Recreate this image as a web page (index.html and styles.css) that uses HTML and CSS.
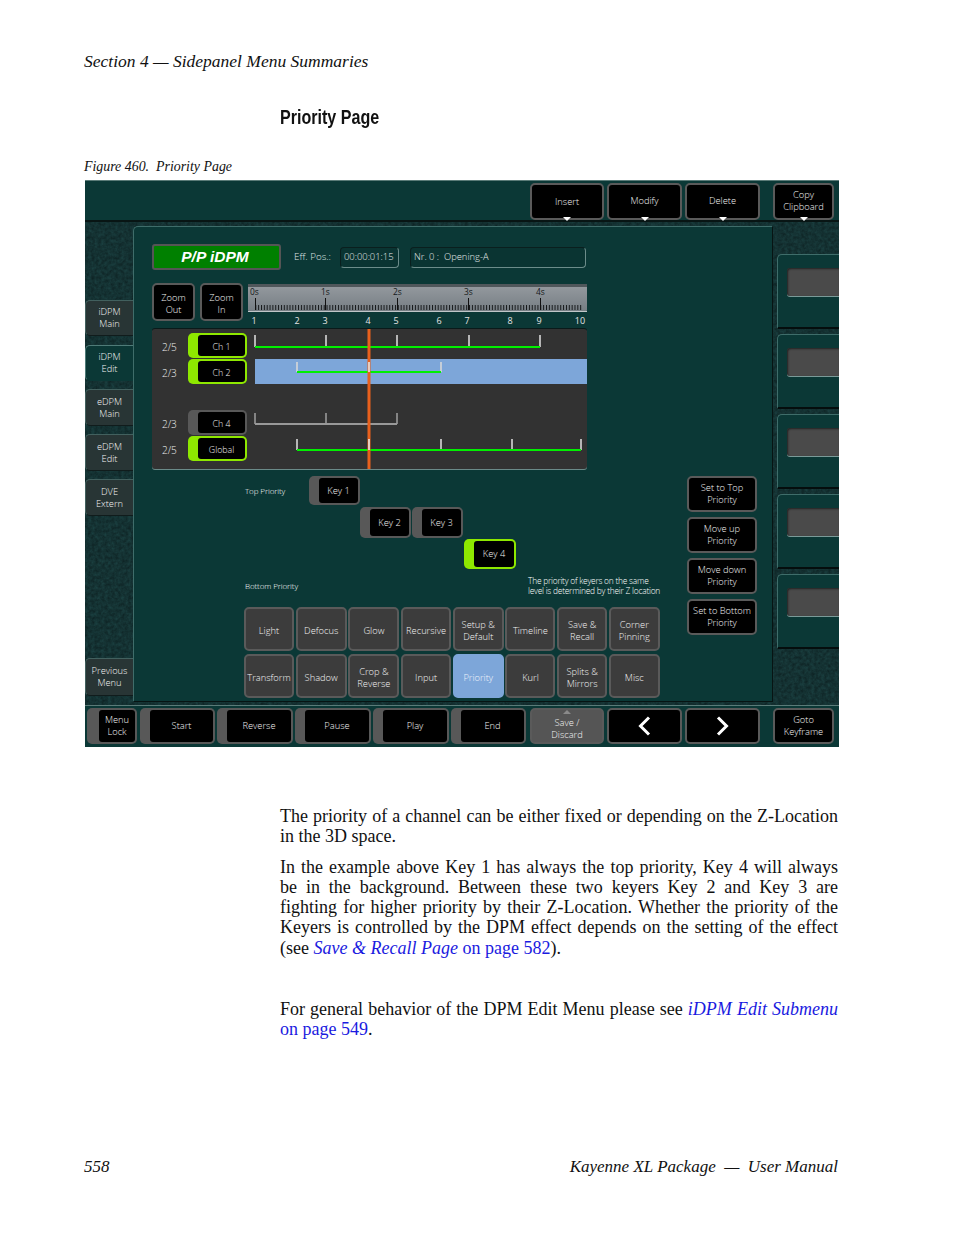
FILE: index.html
```html
<!DOCTYPE html>
<html lang="en">
<head>
<meta charset="utf-8">
<title>Priority Page</title>
<link rel="stylesheet" href="styles.css">
</head>
<body>
<div class="page">
  <header class="running-head">Section 4 — Sidepanel Menu Summaries</header>
  <h2 class="page-title">Priority Page</h2>
  <div class="caption">Figure 460.&nbsp; Priority Page</div>

  <div class="ui">
    <svg class="noise" width="754" height="567" aria-hidden="true">
      <filter id="nz"><feTurbulence type="fractalNoise" baseFrequency="0.3" numOctaves="3" seed="4"/><feColorMatrix values="0 0 0 0 0.03  0 0 0 0 0.17  0 0 0 0 0.17  0.45 0 0 0 0"/></filter>
      <rect width="754" height="567" filter="url(#nz)"/>
    </svg>
    <div class="topbar">
      <div class="btn w74 drop"><span class="lower">Insert</span></div>
      <div class="btn w75 drop">Modify</div>
      <div class="btn w75 drop">Delete</div>
      <div class="btn w61 gap-l drop">Copy<br>Clipboard</div>
    </div>

    <div class="middle">
      <nav class="tabs">
        <div class="tab t1">iDPM<br>Main</div>
        <div class="tab active t2">iDPM<br>Edit</div>
        <div class="tab t3">eDPM<br>Main</div>
        <div class="tab t3">eDPM<br>Edit</div>
        <div class="tab t3">DVE<br>Extern</div>
        <div class="tab prev">Previous<br>Menu</div>
      </nav>

      <main class="panel">
        <div class="status-row">
          <div class="mode">P/P iDPM</div>
          <span class="eff">Eff. Pos.:</span>
          <div class="field f-time">00:00:01:15</div>
          <div class="field f-name">Nr. 0 :&nbsp; Opening-A</div>
        </div>

        <div class="zoom-row">
          <div class="btn zoom">Zoom<br>Out</div>
          <div class="btn zoom">Zoom<br>In</div>
          <svg class="ruler" width="339" height="46" viewBox="0 0 339 46">
            <defs>
              <linearGradient id="rg" x1="0" y1="0" x2="0" y2="1">
                <stop offset="0" stop-color="#969ba0"/>
                <stop offset="1" stop-color="#757d83"/>
              </linearGradient>
              <pattern id="mt" width="2.85" height="6" patternUnits="userSpaceOnUse" x="7.3" y="20">
                <rect width="1" height="6" fill="#15181a"/>
              </pattern>
            </defs>
            <rect width="339" height="28" rx="2" fill="url(#rg)"/>
            <rect width="339" height="3" fill="#50575b"/>
            <rect y="27" width="339" height="1" fill="#c0c6c8"/>
            <rect x="7.3" y="21" width="327" height="5" fill="url(#mt)"/>
            <path d="M7.5 14V26M77.5 14V26M149.5 14V26M220.5 14V26M292.5 14V26" stroke="#111" stroke-width="1"/>
            <g class="ruler-txt">
              <text x="2" y="11">0s</text><text x="73" y="11">1s</text><text x="145" y="11">2s</text><text x="216" y="11">3s</text><text x="288" y="11">4s</text>
            </g>
            <g class="ruler-num">
              <text x="6" y="40">1</text><text x="49" y="40">2</text><text x="77" y="40">3</text><text x="120" y="40">4</text><text x="148" y="40">5</text><text x="191" y="40">6</text><text x="219" y="40">7</text><text x="262" y="40">8</text><text x="291" y="40">9</text><text x="332" y="40">10</text>
            </g>
          </svg>
        </div>

        <div class="timeline">
          <svg class="tracks" width="435" height="140" viewBox="0 0 435 140">
            <rect x="103" y="30" width="332" height="25" fill="#7da6d9"/>
            <g stroke="#d8d8d8" stroke-width="1.6">
              <path d="M103 6V18M174 6V18M245 6V18M317 6V18M388 6V18"/>
              <path d="M145 33V43M217 33V43M289 33V43"/>
              <path d="M145 110V121M217 110V121M289 110V121M360 110V121M429 110V121"/>
            </g>
            <path d="M103 84V95M174 84V95M245 84V95" stroke="#999" stroke-width="1.6"/>
            <path d="M103 18H388" stroke="#00f000" stroke-width="2"/>
            <path d="M145 43H289" stroke="#00f000" stroke-width="2"/>
            <path d="M103 95H245" stroke="#999" stroke-width="2"/>
            <path d="M145 121H429" stroke="#00f000" stroke-width="2"/>
            <rect x="215.5" y="0" width="3" height="140" fill="#e8601c"/>
            <g stroke="#e8e8e8" stroke-width="1.6">
              <path d="M217 33V43M217 110V121"/>
            </g>
          </svg>
          <div class="track"><span class="ratio">2/5</span><div class="key on tk"><span class="key-in">Ch 1</span></div></div>
          <div class="track"><span class="ratio">2/3</span><div class="key on tk"><span class="key-in">Ch 2</span></div></div>
          <div class="track t-gap"><span class="ratio">2/3</span><div class="key tk"><span class="key-in">Ch 4</span></div></div>
          <div class="track"><span class="ratio">2/5</span><div class="key on tk"><span class="key-in">Global</span></div></div>
        </div>

        <div class="lower-area">
          <div class="lower-left">
            <div class="key-row"><span class="small-lbl top-lbl">Top Priority</span><div class="key k1"><span class="key-in">Key 1</span></div></div>
            <div class="key-row r2"><div class="key k2"><span class="key-in">Key 2</span></div><div class="key k2"><span class="key-in">Key 3</span></div></div>
            <div class="key-row r3"><div class="key on k3"><span class="key-in">Key 4</span></div></div>
            <div class="note-row"><span class="small-lbl bottom-lbl">Bottom Priority</span><span class="note">The priority of keyers on the same<br>level is determined by their Z location</span></div>
            <div class="menu-grid">
              <div class="cell">Light</div><div class="cell">Defocus</div><div class="cell">Glow</div><div class="cell">Recursive</div><div class="cell">Setup &amp;<br>Default</div><div class="cell">Timeline</div><div class="cell">Save &amp;<br>Recall</div><div class="cell">Corner<br>Pinning</div>
              <div class="cell">Transform</div><div class="cell">Shadow</div><div class="cell">Crop &amp;<br>Reverse</div><div class="cell">Input</div><div class="cell sel">Priority</div><div class="cell">Kurl</div><div class="cell">Splits &amp;<br>Mirrors</div><div class="cell">Misc</div>
            </div>
          </div>
          <div class="lower-right">
            <div class="btn prio">Set to Top<br>Priority</div>
            <div class="btn prio">Move up<br>Priority</div>
            <div class="btn prio">Move down<br>Priority</div>
            <div class="btn prio">Set to Bottom<br>Priority</div>
          </div>
        </div>
      </main>

      <aside class="side">
        <div class="slot"><div class="slot-in"></div></div>
        <div class="slot"><div class="slot-in"></div></div>
        <div class="slot"><div class="slot-in"></div></div>
        <div class="slot"><div class="slot-in"></div></div>
        <div class="slot"><div class="slot-in"></div></div>
      </aside>
    </div>

    <div class="bottombar">
      <div class="key b50"><span class="key-in">Menu<br>Lock</span></div>
      <div class="key b75"><span class="key-in">Start</span></div>
      <div class="key b76"><span class="key-in">Reverse</span></div>
      <div class="key b76"><span class="key-in">Pause</span></div>
      <div class="key b76"><span class="key-in">Play</span></div>
      <div class="key b75"><span class="key-in">End</span></div>
      <div class="btn w74 save">Save /<br>Discard</div>
      <div class="btn w75"><svg width="13" height="20" viewBox="0 0 13 20"><path d="M11 1.5L2.5 10L11 18.5" fill="none" stroke="#fff" stroke-width="3"/></svg></div>
      <div class="btn w75"><svg width="13" height="20" viewBox="0 0 13 20"><path d="M2 1.5L10.5 10L2 18.5" fill="none" stroke="#fff" stroke-width="3"/></svg></div>
      <div class="btn w61 gap-l">Goto<br>Keyframe</div>
    </div>
  </div>

  <article class="body-text">
    <p class="p1"><span class="j">The priority of a channel can be either fixed or depending on the Z-Location</span><span class="l">in the 3D space.</span></p>
    <p class="p2"><span class="j">In the example above Key 1 has always the top priority, Key 4 will always</span><span class="j">be in the background. Between these two keyers Key 2 and Key 3 are</span><span class="j">fighting for higher priority by their Z-Location. Whether the priority of the</span><span class="j">Keyers is controlled by the DPM effect depends on the setting of the effect</span><span class="l">(see <a class="lnk"><i>Save &amp; Recall Page</i> on page 582</a>).</span></p>
    <p class="p3"><span class="j">For general behavior of the DPM Edit Menu please see <a class="lnk"><i>iDPM Edit Submenu</i></a></span><span class="l"><a class="lnk">on page 549</a>.</span></p>
  </article>

  <footer class="foot"><span>558</span><span>Kayenne XL Package&nbsp; —&nbsp; User Manual</span></footer>
</div>
</body>
</html>
```
FILE: styles.css
```css
* { box-sizing: border-box; }
html, body { margin: 0; padding: 0; background: #fff; }
body { font-family: "Liberation Serif", serif; color: #111; }
.page { position: relative; width: 954px; height: 1235px; padding: 51px 116px 0 84px; overflow: hidden; }
.running-head { font-style: italic; font-size: 17.5px; line-height: 20px; height: 20px; white-space: nowrap; }
.page-title { font-family: "Liberation Sans", sans-serif; font-weight: 700; font-size: 19.5px; line-height: 24px; margin: 34px 0 0 196px; color: #111; transform: scaleX(0.825); transform-origin: left center; }
.caption { font-style: italic; font-size: 13.9px; line-height: 18px; margin-top: 29px; }

/* UI */
.ui { position: relative; width: 754px; height: 567px; margin: 4px 0 0 1px; background: #0c1f20; font-family: "Open Sans", "DejaVu Sans", sans-serif; font-weight: 300; font-size: 9.3px; color: #f4f4f4; display: flex; flex-direction: column; line-height: 12px; }
.noise { position: absolute; left: 0; top: 0; }
.topbar { position: relative; height: 42px; background: #0b3836; border-top: 1px solid #5b7b78; border-bottom: 2px solid #081514; display: flex; align-items: flex-start; gap: 3px; padding: 2px 0 0 445px; }
.btn { position: relative; flex: none; border: 2px solid #5a5a5a; border-radius: 5px; background: #000; display: flex; align-items: center; justify-content: center; text-align: center; }
.w74 { width: 74px; height: 37px; }
.w75 { width: 75px; height: 37px; }
.w61 { width: 61px; height: 37px; }
.gap-l { margin-left: 10px; }
.lower { position: relative; top: 1px; }
.drop { padding-bottom: 2px; }
.drop::after { content: ""; position: absolute; left: 50%; bottom: -3px; margin-left: -4px; border-style: solid; border-width: 4px 4px 0; border-color: #fff transparent transparent; }

.middle { position: relative; flex: 1; display: flex; min-height: 0; padding-top: 4px; }
.tabs { width: 48px; flex: none; display: flex; flex-direction: column; padding-top: 74px; }
.tab { height: 37px; background: #283535; border: 1px solid #42605e; border-right: 0; border-bottom-color: #101c1c; border-radius: 5px 0 0 5px; display: flex; align-items: center; justify-content: center; text-align: center; }
.t1, .t2 { height: 36px; }
.tab.active { background: #0b3836; border-color: #4f7b78; border-bottom-color: #0b3836; }
.t2 { margin-top: 9px; }
.t3 { margin-top: 8px; }
.prev { margin-top: 142px; height: 38px; }

.panel { width: 639px; height: 475px; flex: none; background: #0b3836; border: 1px solid #3f6d6a; border-width: 1px 0 0 1px; border-radius: 5px 0 0 0; box-shadow: 1px 1px 0 #071413; padding: 17px 0 0 18px; }
.status-row { display: flex; align-items: center; height: 26px; }
.mode { width: 129px; height: 26px; background: #008000; border: 2px solid #555; border-radius: 3px; color: #fff; font: italic 700 15.5px/22px "Liberation Sans", sans-serif; text-align: center; padding-right: 3px; }
.eff { margin-left: 13px; width: 46px; font-size: 9.8px; color: #dfe6e4; white-space: nowrap; }
.field { height: 21px; border: 1px solid #0a1f1e; border-right-color: #6c8c8a; border-bottom-color: #6c8c8a; border-radius: 4px; background: #0a3432; display: flex; align-items: center; font-size: 9.4px; padding-left: 3px; color: #e8ecec; white-space: nowrap; }
.f-time { width: 59px; }
.f-name { width: 176px; margin-left: 11px; }

.zoom-row { display: flex; margin-top: 13px; height: 46px; }
.zoom { width: 43px; height: 38px; margin-right: 5px; padding-top: 3px; }
.ruler { flex: none; margin-top: 1px; }
.ruler-txt text { font-size: 8.4px; font-weight: 400; fill: #15191b; }
.ruler-num text { font-size: 9px; font-weight: 400; fill: #e4e4e4; text-anchor: middle; }

.timeline { position: relative; width: 435px; height: 140px; background: #323232; border-radius: 3px; box-shadow: 0 1px 0 #6a8a88, 0 -1px 0 #0a1a1a; padding-top: 4px; }
.tracks { position: absolute; left: 0; top: 0; }
.track { position: relative; display: flex; align-items: center; height: 25px; margin-bottom: 1px; padding-left: 10px; }
.t-gap { margin-top: 26px; }
.ratio { width: 26px; font-size: 10px; padding-top: 2px; color: #eee; }

.key { flex: none; display: flex; background: #585858; border-radius: 5px; padding: 2px 2px 2px 10px; }
.key.on { background: #8ee800; }
.key-in { flex: 1; background: #000; border-radius: 3px; display: flex; align-items: center; justify-content: center; text-align: center; }
.tk { width: 59px; height: 25px; }
.tk .key-in { font-size: 8.8px; padding-top: 2px; }

.lower-area { display: flex; margin: 7px 0 0 92px; }
.lower-left { width: 443px; flex: none; }
.key-row { display: flex; }
.small-lbl { font-size: 8px; font-weight: 300; letter-spacing: -0.1px; color: #fff; }
.top-lbl { width: 65px; align-self: center; padding-left: 1px; }
.k1 { width: 51px; height: 29px; }
.r2 { margin: 2px 0 0 116px; gap: 1px; }
.k2 { width: 51px; height: 31px; }
.r3 { margin: 1px 0 0 220px; }
.k3 { width: 52px; height: 30px; }
.note-row { display: flex; align-items: center; height: 38px; padding-bottom: 4px; }
.bottom-lbl { width: 284px; padding-left: 1px; }
.note { font-size: 8.4px; font-weight: 300; line-height: 10px; letter-spacing: -0.22px; white-space: nowrap; color: #fff; }
.menu-grid { display: grid; grid-template-columns: 50px 51px 51px 50px 51px 50px 50px 51px; column-gap: 1.7px; grid-template-rows: 44px 44px; row-gap: 3px; }
.cell { background: #3c3c3c; border: 2px solid #5a5a5a; border-radius: 5px; padding-top: 4px; display: flex; align-items: center; justify-content: center; text-align: center; white-space: nowrap; }
.cell.sel { background: #7da6d9; border-color: #7da6d9; color: #eef4fb; }
.lower-right { display: flex; flex-direction: column; gap: 5px; }
.prio { width: 70px; height: 36px; }

.side { flex: 1; padding: 28px 0 0 5px; display: flex; flex-direction: column; gap: 5px; }
.slot { flex: none; height: 75px; background: #0b3836; border: 1px solid #3f6d6a; border-width: 1px 0 0 1px; border-radius: 5px 0 0 0; border-bottom: 2px solid #050d0d; padding: 13px 0 0 9px; }
.slot-in { height: 28px; background: #4a4a4a; border-radius: 3px 0 0 3px; box-shadow: inset 1px 1px 2px #222, 0 1px 0 #7a9a98; }

.bottombar { position: relative; height: 42px; margin-top: 1px; background: #0b3836; border-top: 1px solid #5b7b78; display: flex; align-items: flex-start; gap: 2px; padding: 2px 0 0 2px; }
.bottombar .btn, .bottombar .key { height: 36px; }
.b50 { width: 50px; padding-left: 12px; margin-right: 1px; }
.b75 { width: 75px; }
.b76 { width: 76px; }
.save { background: #555; margin-left: 2px; margin-right: 1px; padding-top: 6px; }
.save::before { content: ""; position: absolute; left: 50%; top: 0; margin-left: -4px; border-style: solid; border-width: 0 4px 4px; border-color: transparent transparent #8a8a8a; }
.bottombar .w75 { margin-right: 1px; }

/* Text */
.body-text { width: 558px; margin: 59px 0 0 196px; font-size: 18px; line-height: 20.25px; }
.body-text p { margin: 0; }
.body-text .p2 { margin-top: 10px; }
.body-text .p3 { margin-top: 41px; }
.j { display: block; text-align: justify; text-align-last: justify; }
.l { display: block; }
.lnk { color: #1a1ae0; }
.foot { position: absolute; left: 84px; right: 116px; top: 1157px; display: flex; justify-content: space-between; font-style: italic; font-size: 17px; line-height: 20px; }
```
